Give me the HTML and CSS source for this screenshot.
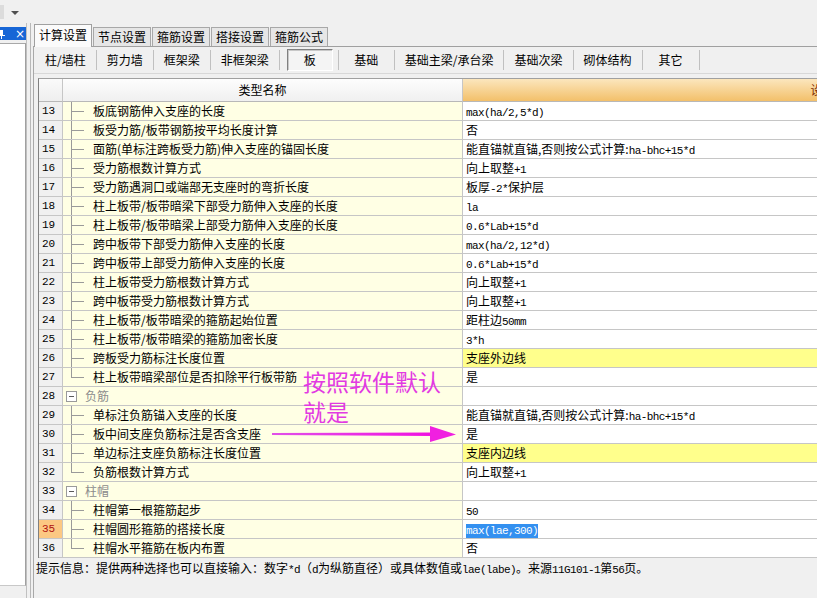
FILE: index.html
```html
<!DOCTYPE html>
<html lang="zh-CN">
<head>
<meta charset="utf-8">
<title>计算设置</title>
<link rel="stylesheet" href="styles.css">
</head>
<body>
<div class="app">
  <div class="topbar"><span class="stub"></span><span class="dd"></span></div>
  <div class="workspace">
    <div class="leftpane">
      <div class="ptitle">
        <svg class="pin" width="6" height="10" viewBox="0 0 6 10"><rect x="0" y="1" width="3" height="5" fill="#fff"/><rect x="0" y="6" width="5" height="1" fill="#fff"/><rect x="1" y="7" width="1" height="3" fill="#fff"/></svg>
        <span class="px">×</span>
      </div>
      <div class="pwhite"></div>
    </div>
    <div class="splitter"></div>
    <div class="main">
      <div class="tabs">
        <div class="tab active">计算设置</div>
        <div class="tab">节点设置</div>
        <div class="tab">箍筋设置</div>
        <div class="tab">搭接设置</div>
        <div class="tab">箍筋公式</div>
      </div>
      <div class="tabpanel">
        <div class="subtabs">
          <div class="sbtn">柱/墙柱</div>
          <div class="sbtn">剪力墙</div>
          <div class="sbtn">框架梁</div>
          <div class="sbtn">非框架梁</div>
          <div class="sbtn pressed">板</div>
          <div class="sbtn first">基础</div>
          <div class="sbtn">基础主梁/承台梁</div>
          <div class="sbtn">基础次梁</div>
          <div class="sbtn">砌体结构</div>
          <div class="sbtn">其它</div>
        </div>
        <div class="grid">
          <div class="row head">
            <div class="c-num"></div>
            <div class="c-name">类型名称</div>
            <div class="c-val">设置值</div>
          </div>
          <div class="row"><div class="c-num">13</div><div class="c-name t">板底钢筋伸入支座的长度</div><div class="c-val"><span class="a">max(ha/2,5*d)</span></div></div>
          <div class="row"><div class="c-num">14</div><div class="c-name t">板受力筋/板带钢筋按平均长度计算</div><div class="c-val">否</div></div>
          <div class="row"><div class="c-num">15</div><div class="c-name t">面筋(单标注跨板受力筋)伸入支座的锚固长度</div><div class="c-val">能直锚就直锚,否则按公式计算:<span class="a">ha-bhc+15*d</span></div></div>
          <div class="row"><div class="c-num">16</div><div class="c-name t">受力筋根数计算方式</div><div class="c-val">向上取整<span class="a">+1</span></div></div>
          <div class="row"><div class="c-num">17</div><div class="c-name t">受力筋遇洞口或端部无支座时的弯折长度</div><div class="c-val">板厚<span class="a">-2*</span>保护层</div></div>
          <div class="row"><div class="c-num">18</div><div class="c-name t">柱上板带/板带暗梁下部受力筋伸入支座的长度</div><div class="c-val"><span class="a">la</span></div></div>
          <div class="row"><div class="c-num">19</div><div class="c-name t">柱上板带/板带暗梁上部受力筋伸入支座的长度</div><div class="c-val"><span class="a">0.6*Lab+15*d</span></div></div>
          <div class="row"><div class="c-num">20</div><div class="c-name t">跨中板带下部受力筋伸入支座的长度</div><div class="c-val"><span class="a">max(ha/2,12*d)</span></div></div>
          <div class="row"><div class="c-num">21</div><div class="c-name t">跨中板带上部受力筋伸入支座的长度</div><div class="c-val"><span class="a">0.6*Lab+15*d</span></div></div>
          <div class="row"><div class="c-num">22</div><div class="c-name t">柱上板带受力筋根数计算方式</div><div class="c-val">向上取整<span class="a">+1</span></div></div>
          <div class="row"><div class="c-num">23</div><div class="c-name t">跨中板带受力筋根数计算方式</div><div class="c-val">向上取整<span class="a">+1</span></div></div>
          <div class="row"><div class="c-num">24</div><div class="c-name t">柱上板带/板带暗梁的箍筋起始位置</div><div class="c-val">距柱边<span class="a">50mm</span></div></div>
          <div class="row"><div class="c-num">25</div><div class="c-name t">柱上板带/板带暗梁的箍筋加密长度</div><div class="c-val"><span class="a">3*h</span></div></div>
          <div class="row"><div class="c-num">26</div><div class="c-name t">跨板受力筋标注长度位置</div><div class="c-val hl">支座外边线</div></div>
          <div class="row"><div class="c-num">27</div><div class="c-name t last">柱上板带暗梁部位是否扣除平行板带筋</div><div class="c-val">是</div></div>
          <div class="row"><div class="c-num">28</div><div class="c-name g"><span class="box"></span>负筋</div><div class="c-val"></div></div>
          <div class="row"><div class="c-num">29</div><div class="c-name t">单标注负筋锚入支座的长度</div><div class="c-val">能直锚就直锚,否则按公式计算:<span class="a">ha-bhc+15*d</span></div></div>
          <div class="row"><div class="c-num">30</div><div class="c-name t">板中间支座负筋标注是否含支座</div><div class="c-val">是</div></div>
          <div class="row"><div class="c-num">31</div><div class="c-name t">单边标注支座负筋标注长度位置</div><div class="c-val hl">支座内边线</div></div>
          <div class="row"><div class="c-num">32</div><div class="c-name t last">负筋根数计算方式</div><div class="c-val">向上取整<span class="a">+1</span></div></div>
          <div class="row"><div class="c-num">33</div><div class="c-name g"><span class="box"></span>柱帽</div><div class="c-val"></div></div>
          <div class="row"><div class="c-num">34</div><div class="c-name t">柱帽第一根箍筋起步</div><div class="c-val"><span class="a">50</span></div></div>
          <div class="row"><div class="c-num cur">35</div><div class="c-name t">柱帽圆形箍筋的搭接长度</div><div class="c-val"><span class="a sel">max(lae,300)</span></div></div>
          <div class="row"><div class="c-num">36</div><div class="c-name t last">柱帽水平箍筋在板内布置</div><div class="c-val">否</div></div>
        </div>
        <div class="hint">提示信息：提供两种选择也可以直接输入：数字<span class="a">*d</span>（<span class="a">d</span>为纵筋直径）或具体数值或<span class="a">lae(labe)</span>。来源<span class="a">11G101-1</span>第<span class="a">56</span>页。</div>
      </div>
    </div>
  </div>
  <div class="note">按照软件默认<br>就是</div>
  <svg class="arrow" width="190" height="20" viewBox="0 0 190 20">
    <defs>
      <linearGradient id="ag" x1="0" x2="1" y1="0" y2="0">
        <stop offset="0" stop-color="#e050e8"/>
        <stop offset="1" stop-color="#f010e0"/>
      </linearGradient>
    </defs>
    <path d="M2 9 L164 8.5 L164 12 L2 11 Z" fill="url(#ag)"/>
    <path d="M160 2 L186 10.5 L160 18 Z" fill="#f020e0"/>
  </svg>
</div>
</body>
</html>
```
FILE: styles.css
```css
html, body {
  margin: 0;
  padding: 0;
}
body {
  width: 817px;
  height: 598px;
  overflow: hidden;
  background: #f0f0f0;
  font-family: "Noto Sans CJK SC", "Noto Sans", sans-serif;
  font-size: 12px;
  color: #000;
}
.app {
  position: relative;
  width: 817px;
  height: 598px;
  display: flex;
  flex-direction: column;
}
.topbar {
  height: 23px;
  flex: none;
  display: flex;
  align-items: center;
  background: #f0f0f0;
}
.stub {
  width: 4px;
  height: 14px;
  background: #dcdcdc;
}
.dd {
  margin-left: 7px;
  width: 0;
  height: 0;
  border-left: 4px solid transparent;
  border-right: 4px solid transparent;
  border-top: 4px solid #505050;
  margin-top: 2px;
}
.workspace {
  flex: 1;
  display: flex;
  min-height: 0;
}
.leftpane {
  width: 26px;
  flex: none;
  display: flex;
  flex-direction: column;
  padding-top: 4px;
  padding-bottom: 12px;
}
.ptitle {
  height: 13px;
  background: #1766d6;
  display: flex;
  align-items: center;
  color: #fff;
  overflow: hidden;
}
.px {
  margin-left: 9px;
  font-family: "DejaVu Sans", sans-serif;
  font-size: 12px;
  line-height: 12px;
}
.pwhite {
  flex: 1;
  margin-top: 3px;
  background: #fff;
  border-top: 1px solid #a8a8a8;
  border-right: 1px solid #a0a0a0;
  border-bottom: 1px solid #c8c8c8;
}
.splitter {
  width: 7px;
  flex: none;
  border-left: 1px solid #c0c0c0;
  box-sizing: border-box;
  background: linear-gradient(to right, #f0f0f0 3px, #b8b8b8 3px, #b8b8b8 4px, #f0f0f0 4px);
}
.main {
  flex: 1;
  min-width: 0;
  display: flex;
  flex-direction: column;
  padding-top: 1px;
}
.tabs {
  height: 22px;
  display: flex;
  align-items: flex-end;
  padding-left: 1px;
  flex: none;
}
.tab {
  height: 18px;
  line-height: 17px;
  padding: 0 4px;
  white-space: nowrap;
  flex: none;
  text-align: center;
  background: #e6e6e6;
  border: 1px solid #a8a8a8;
  border-bottom: none;
  margin-right: 1px;
  color: #000;
}
.tab.active {
  height: 22px;
  line-height: 20px;
  background: #fbfbfb;
  border-color: #a0a0a0;
  margin-right: 1px;
  margin-bottom: -1px;
  position: relative;
}
.tabpanel {
  flex: 1;
  min-height: 0;
  border-top: 1px solid #a0a0a0;
  border-left: 1px solid #a8a8a8;
  display: flex;
  flex-direction: column;
  padding-left: 4px;
}
.subtabs {
  height: 26px;
  flex: none;
  display: flex;
  align-items: center;
  margin-left: -4px;
  padding-left: 1px;
  border-bottom: 1px solid #d8d8d8;
}
.sbtn {
  height: 20px;
  line-height: 20px;
  min-width: 57px;
  padding: 0 10px;
  white-space: nowrap;
  flex: none;
  box-sizing: border-box;
  text-align: center;
  border-right: 1px solid #c0c0c0;
}
.sbtn.pressed {
  margin: 0 5px 0 7px;
  width: 46px;
  min-width: 46px;
  height: 22px;
  line-height: 20px;
  background: #f4f4f4;
  border-top: 1px solid #808080;
  border-left: 1px solid #808080;
  border-right: 1px solid #fff;
  border-bottom: 1px solid #fff;
  box-shadow: inset 1px 1px 0 #c8c8c8;
}
.sbtn.first {
  border-left: 1px solid #c0c0c0;
}
.grid {
  margin-top: 4px;
  border-top: 1px solid #a0a0a0;
  border-left: 1px solid #808080;
  flex: none;
}
.row {
  display: flex;
  height: 19px;
}
.row > div {
  box-sizing: border-box;
  border-bottom: 1px solid #c6c6c6;
  border-right: 1px solid #c6c6c6;
  white-space: nowrap;
  overflow: hidden;
  line-height: 18px;
}
.c-num {
  width: 24px;
  flex: none;
  background: #f0f0f0;
  padding-left: 3px;
  font-family: "Liberation Mono", monospace;
  font-size: 11px;
  color: #000;
}
.c-num.cur {
  background: #fcc883;
  color: #b01010;
}
.c-name {
  width: 400px;
  flex: none;
  background: #ffffe4;
  padding-left: 30px;
}
.c-val {
  width: 732px;
  flex: none;
  background: #fff;
  padding-left: 3px;
}
.c-val.hl {
  background: #ffff8c;
}
.row.head {
  height: 23px;
}
.row.head > div {
  line-height: 22px;
  border-bottom: 1px solid #b8b8b8;
}
.row.head .c-num {
  background: linear-gradient(#fafafa, #eeeeee);
}
.row.head .c-name {
  padding-left: 0;
  text-align: center;
  background: linear-gradient(#fdfdfd, #f0f0f0);
}
.row.head .c-val {
  padding-left: 0;
  text-align: center;
  color: #7a2a00;
  background: linear-gradient(#fbe6bd, #f3c06a);
}
.c-name.t {
  background-color: #ffffe4;
  background-image:
    linear-gradient(#9a9a9a, #9a9a9a),
    linear-gradient(#9a9a9a, #9a9a9a);
  background-repeat: no-repeat;
  background-size: 1px 19px, 13px 1px;
  background-position: 8px 0, 8px 9px;
}
.c-name.t.last {
  background-size: 1px 10px, 13px 1px;
}
.c-name.g {
  padding-left: 3px;
  color: #8c8c8c;
  display: flex;
  align-items: center;
  gap: 8px;
}
.box {
  width: 9px;
  height: 9px;
  border: 1px solid #9a9a9a;
  background: linear-gradient(#5a5a5a, #5a5a5a) no-repeat center / 5px 1px, #fff;
  flex: none;
}
.a {
  font-family: "Liberation Mono", "DejaVu Sans Mono", monospace;
  font-size: 11px;
  letter-spacing: -0.6px;
}
.sel {
  background: #3390f0;
  color: #fff;
  padding: 1px 0;
}
.hint {
  padding-top: 1px;
  line-height: 18px;
  padding-left: 2px;
  margin-left: -4px;
  white-space: nowrap;
}
.note {
  position: absolute;
  left: 303px;
  top: 366px;
  font-family: "Noto Sans CJK SC", sans-serif;
  font-size: 23px;
  line-height: 30px;
  color: #e23ae2;
}
.arrow {
  position: absolute;
  left: 270px;
  top: 424px;
}
```
